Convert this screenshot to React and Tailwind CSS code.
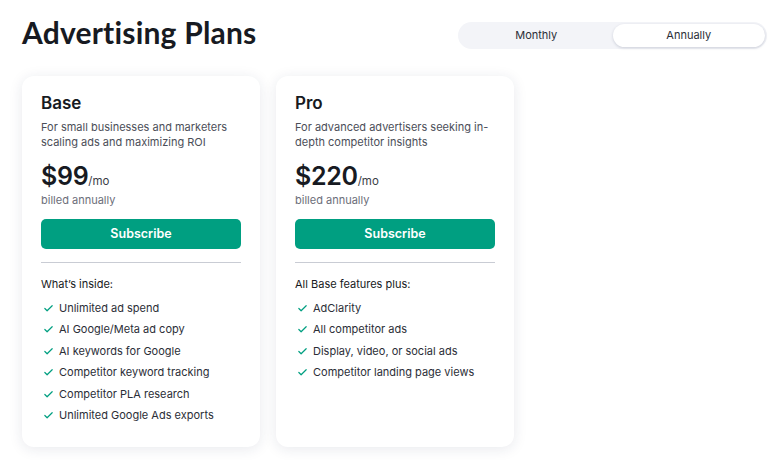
import { Check } from 'lucide-react'

const PLANS = [
  {
    name: 'Base',
    desc: 'For small businesses and marketers scaling ads and maximizing ROI',
    price: '$99',
    listTitle: 'What’s inside:',
    features: [
      'Unlimited ad spend',
      'AI Google/Meta ad copy',
      'AI keywords for Google',
      'Competitor keyword tracking',
      'Competitor PLA research',
      'Unlimited Google Ads exports',
    ],
  },
  {
    name: 'Pro',
    desc: 'For advanced advertisers seeking in-depth competitor insights',
    price: '$220',
    listTitle: 'All Base features plus:',
    features: [
      'AdClarity',
      'All competitor ads',
      'Display, video, or social ads',
      'Competitor landing page views',
    ],
  },
]

function PlanCard({ plan }) {
  return (
    <div className="w-[238px] bg-white rounded-[12px] px-[19px] pt-[17px] pb-[24px] shadow-[0_2px_14px_rgba(30,40,80,0.10)]">
      <h2 className="text-[17px] leading-[20px] font-semibold text-[#171a22]">{plan.name}</h2>
      <p className="mt-[7px] text-[11px] leading-[15px] text-[#4b4e58]">{plan.desc}</p>
      <div className="mt-[11px] flex items-baseline text-[#171a22]">
        <span className="text-[25px] leading-[30px] font-semibold tracking-[-0.3px]">{plan.price}</span>
        <span className="text-[11.5px] text-[#3a3d46]">/mo</span>
      </div>
      <p className="mt-[2px] text-[11px] leading-[14px] text-[#6c6e79]">billed annually</p>
      <button className="mt-[12px] w-full h-[30px] rounded-[5px] bg-[#009f81] text-white text-[12.5px] font-semibold">
        Subscribe
      </button>
      <div className="mt-[13px] h-px bg-[#c9ccd4]" />
      <p className="mt-[14px] text-[11px] leading-[15px] text-[#171a22]">{plan.listTitle}</p>
      <ul className="mt-[9px] flex flex-col gap-[6.4px]">
        {plan.features.map(f => (
          <li key={f} className="flex items-center text-[11px] leading-[15px] text-[#2b2e37]">
            <Check size={11} strokeWidth={2.6} className="text-[#009f81] ml-[2px] mr-[5px] shrink-0" />
            {f}
          </li>
        ))}
      </ul>
    </div>
  )
}

export default function App() {
  return (
    <div className="min-h-[460px] bg-white pl-[22px] pr-[13px] pt-[14px] font-['Inter',sans-serif]">
      <div className="flex justify-between items-start">
        <h1 className="text-[30px] leading-[36px] font-bold text-[#171a22] tracking-[0.2px] font-['Lato',sans-serif]">Advertising Plans</h1>
        <div className="mt-[8px] w-[309px] h-[27px] rounded-full bg-[#f3f4f8] p-[2px] flex text-[11px] text-[#2b2e37]">
          <button className="flex-1 rounded-full">Monthly</button>
          <button className="flex-1 rounded-full bg-white shadow-[0_1px_3px_rgba(30,40,80,0.18)]">Annually</button>
        </div>
      </div>
      <div className="mt-[26px] flex gap-[16px] items-stretch">
        {PLANS.map(p => <PlanCard key={p.name} plan={p} />)}
      </div>
    </div>
  )
}
